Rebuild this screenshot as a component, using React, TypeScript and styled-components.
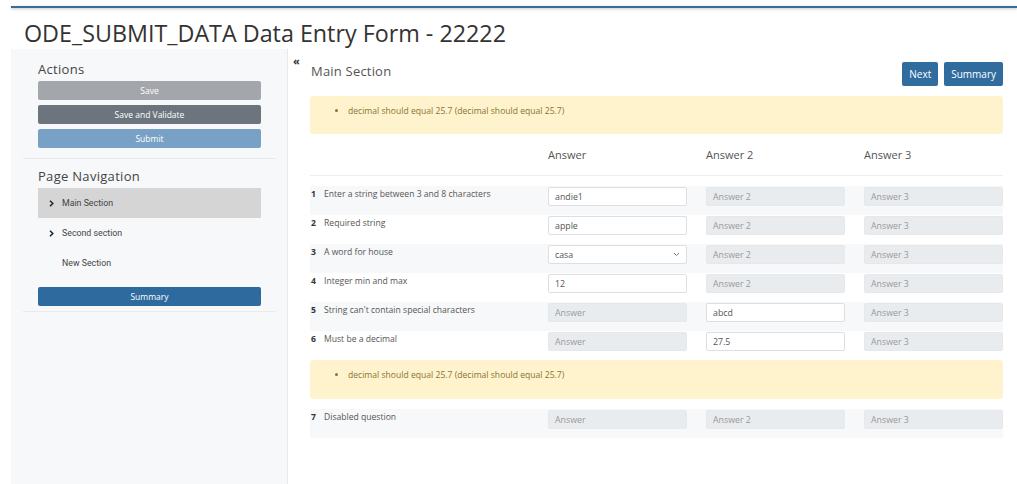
import React from "react";
import styled, { createGlobalStyle } from "styled-components";

const GlobalStyle = createGlobalStyle`
  html, body {
    margin: 0;
    padding: 0;
    background: #ffffff;
    font-family: "Open Sans", "Liberation Sans", sans-serif;
    color: #555;
  }
`;

const Page = styled.div`
  width: 1017px;
  height: 484px;
  overflow: hidden;
  display: flex;
  flex-direction: column;
`;

const TopRule = styled.div`
  margin: 6px 0 0 11px;
  height: 2px;
  background: #3a6c98;
  box-shadow: 0 1px 3px rgba(0, 0, 0, 0.25);
`;

const Title = styled.h1`
  margin: 10px 0 0 24px;
  height: 31px;
  line-height: 31px;
  font-size: 23.3px;
  font-weight: 400;
  color: #333;
`;

const Body = styled.div`
  flex: 1;
  display: flex;
`;

const Sidebar = styled.aside`
  flex: 0 0 277px;
  margin-left: 11px;
  background: #f7f8fa;
  border-right: 1px solid #e8e9eb;
  padding-top: 10px;
  box-sizing: border-box;
`;

const SideBlock = styled.div`
  padding: 0 26px 0 27px;
`;

const SideHeading = styled.h3<{ $top?: number }>`
  margin: ${(p) => p.$top ?? 0}px 0 0 0;
  height: 20px;
  line-height: 20px;
  font-size: 13px;
  font-weight: 400;
  letter-spacing: 0.3px;
  color: #444;
`;

const Stack = styled.div<{ $top: number; $gap: number }>`
  display: flex;
  flex-direction: column;
  gap: ${(p) => p.$gap}px;
  margin-top: ${(p) => p.$top}px;
`;

const tones = {
  light: "#a3a6aa",
  dark: "#6c757d",
  faded: "#79a0c5",
  primary: "#2e6a9e",
};

const SideButton = styled.button<{ $tone: keyof typeof tones }>`
  height: 19px;
  width: 100%;
  border: none;
  border-radius: 2px;
  background: ${(p) => tones[p.$tone]};
  color: #fff;
  font-family: "Open Sans", "Liberation Sans", sans-serif;
  font-size: 8.5px;
  padding: 0;
`;

const Divider = styled.hr<{ $top: number }>`
  margin: ${(p) => p.$top}px 11px 0 12px;
  border: none;
  border-top: 1px solid #e9eaec;
  height: 0;
`;

const NavList = styled.ul`
  list-style: none;
  margin: 2px 0 0 0;
  padding: 0;
`;

const NavItem = styled.li<{ $active?: boolean }>`
  height: 30px;
  display: flex;
  align-items: center;
  background: ${(p) => (p.$active ? "#d5d5d5" : "transparent")};
  font-family: Roboto, "Liberation Sans", sans-serif;
  font-size: 8.8px;
  color: #444;
`;

const Chevron = styled.span`
  width: 24px;
  display: flex;
  justify-content: center;
  padding-left: 2px;
  box-sizing: border-box;
`;

const Main = styled.main`
  position: relative;
  flex: 1;
  min-width: 0;
  padding: 13px 14px 0 22px;
`;

const Collapse = styled.span`
  position: absolute;
  left: 5px;
  top: 4px;
  font-size: 11px;
  font-weight: 700;
  color: #333;
`;

const SectionBar = styled.div`
  display: flex;
  align-items: center;
  justify-content: space-between;
  height: 24px;
`;

const SectionTitle = styled.h2`
  margin: 0 0 6px 1px;
  font-size: 13px;
  font-weight: 400;
  letter-spacing: 0.2px;
  color: #555;
`;

const Buttons = styled.div`
  display: flex;
  gap: 6px;
`;

const PrimaryButton = styled.button`
  height: 24px;
  padding: 0 7px;
  border: none;
  border-radius: 2px;
  background: #316c9f;
  color: #fff;
  font-family: "Open Sans", "Liberation Sans", sans-serif;
  font-size: 10px;
`;

const Alert = styled.div<{ $top: number; $height: number }>`
  margin-top: ${(p) => p.$top}px;
  height: ${(p) => p.$height}px;
  background: #fff3cd;
  border-radius: 3px;
  box-sizing: border-box;
  padding-top: 8px;

  ul {
    margin: 0;
    padding-left: 38px;
  }
  li {
    font-size: 8.6px;
    line-height: 14px;
    color: #8a7437;
  }
`;

const Grid = styled.div`
  display: grid;
  grid-template-columns: 219px 139px 139px 139px;
  column-gap: 19px;
`;

const HeadRow = styled(Grid)`
  height: 41px;
  align-items: center;
  border-bottom: 1px solid #eceef0;
  margin-bottom: 10px;

  span {
    font-size: 11px;
    color: #555;
  }
`;

const Row = styled(Grid)<{ $striped?: boolean }>`
  height: 29px;
  padding-top: 1px;
  box-sizing: border-box;
  background: ${(p) => (p.$striped ? "#f7f8fa" : "transparent")};
  align-items: start;
`;

const Label = styled.div`
  display: flex;
  gap: 8px;
  padding: 0 0 0 1px;
  font-size: 8.6px;
  line-height: 14px;
  color: #555;

  b {
    color: #333;
    width: 5px;
  }
`;

const Field = styled.div<{ $disabled?: boolean }>`
  height: 19px;
  box-sizing: border-box;
  border: 1px solid ${(p) => (p.$disabled ? "#e6e8eb" : "#dcdfe3")};
  border-radius: 2px;
  background: ${(p) => (p.$disabled ? "#e9ecef" : "#fff")};
  padding: 0 6px;
  display: flex;
  align-items: center;
  justify-content: space-between;
  font-size: 8.8px;
  color: ${(p) => (p.$disabled ? "#999" : "#555")};
`;

const Spacer = styled.div`
  height: 10px;
`;

type Cell = { value: string; disabled?: boolean; select?: boolean };

type Question = { n: number; text: string; cells: Cell[] };

const questions: Question[] = [
  {
    n: 1,
    text: "Enter a string between 3 and 8 characters",
    cells: [{ value: "andie1" }, { value: "Answer 2", disabled: true }, { value: "Answer 3", disabled: true }],
  },
  {
    n: 2,
    text: "Required string",
    cells: [{ value: "apple" }, { value: "Answer 2", disabled: true }, { value: "Answer 3", disabled: true }],
  },
  {
    n: 3,
    text: "A word for house",
    cells: [{ value: "casa", select: true }, { value: "Answer 2", disabled: true }, { value: "Answer 3", disabled: true }],
  },
  {
    n: 4,
    text: "Integer min and max",
    cells: [{ value: "12" }, { value: "Answer 2", disabled: true }, { value: "Answer 3", disabled: true }],
  },
  {
    n: 5,
    text: "String can't contain special characters",
    cells: [{ value: "Answer", disabled: true }, { value: "abcd" }, { value: "Answer 3", disabled: true }],
  },
  {
    n: 6,
    text: "Must be a decimal",
    cells: [{ value: "Answer", disabled: true }, { value: "27.5" }, { value: "Answer 3", disabled: true }],
  },
];

const lastQuestion: Question = {
  n: 7,
  text: "Disabled question",
  cells: [
    { value: "Answer", disabled: true },
    { value: "Answer 2", disabled: true },
    { value: "Answer 3", disabled: true },
  ],
};

const ChevronIcon = () => (
  <svg width="5" height="7" viewBox="0 0 5 7">
    <path d="M1 0.8 L3.8 3.5 L1 6.2" fill="none" stroke="#222" strokeWidth="1.5" />
  </svg>
);

const QuestionRow = ({ q, striped }: { q: Question; striped: boolean }) => (
  <Row $striped={striped}>
    <Label>
      <b>{q.n}</b>
      <span>{q.text}</span>
    </Label>
    {q.cells.map((c, i) => (
      <Field key={i} $disabled={c.disabled}>
        <span>{c.value}</span>
        {c.select && (
          <svg width="7" height="5" viewBox="0 0 7 5">
            <path d="M1 1 L3.5 3.5 L6 1" fill="none" stroke="#777" strokeWidth="1" />
          </svg>
        )}
      </Field>
    ))}
  </Row>
);

const ValidationAlert = ({ top, height }: { top: number; height: number }) => (
  <Alert $top={top} $height={height}>
    <ul>
      <li>decimal should equal 25.7 (decimal should equal 25.7)</li>
    </ul>
  </Alert>
);

const App = () => {
  return (
    <Page>
      <GlobalStyle />
      <TopRule />
      <Title>ODE_SUBMIT_DATA Data Entry Form - 22222</Title>
      <Body>
        <Sidebar>
          <SideBlock>
            <SideHeading>Actions</SideHeading>
            <Stack $top={2} $gap={5}>
              <SideButton $tone="light">Save</SideButton>
              <SideButton $tone="dark">Save and Validate</SideButton>
              <SideButton $tone="faded">Submit</SideButton>
            </Stack>
          </SideBlock>
          <Divider $top={10} />
          <SideBlock>
            <SideHeading $top={7}>Page Navigation</SideHeading>
            <NavList>
              <NavItem $active>
                <Chevron>
                  <ChevronIcon />
                </Chevron>
                Main Section
              </NavItem>
              <NavItem>
                <Chevron>
                  <ChevronIcon />
                </Chevron>
                Second section
              </NavItem>
              <NavItem>
                <Chevron />
                New Section
              </NavItem>
            </NavList>
            <Stack $top={9} $gap={0}>
              <SideButton $tone="primary">Summary</SideButton>
            </Stack>
          </SideBlock>
          <Divider $top={5} />
        </Sidebar>
        <Main>
          <Collapse>«</Collapse>
          <SectionBar>
            <SectionTitle>Main Section</SectionTitle>
            <Buttons>
              <PrimaryButton>Next</PrimaryButton>
              <PrimaryButton>Summary</PrimaryButton>
            </Buttons>
          </SectionBar>
          <ValidationAlert top={10} height={38} />
          <HeadRow>
            <span />
            <span>Answer</span>
            <span>Answer 2</span>
            <span>Answer 3</span>
          </HeadRow>
          {questions.map((q, i) => (
            <QuestionRow key={q.n} q={q} striped={i % 2 === 0} />
          ))}
          <ValidationAlert top={0} height={39} />
          <Spacer />
          <QuestionRow q={lastQuestion} striped />
        </Main>
      </Body>
    </Page>
  );
};

export default App;
